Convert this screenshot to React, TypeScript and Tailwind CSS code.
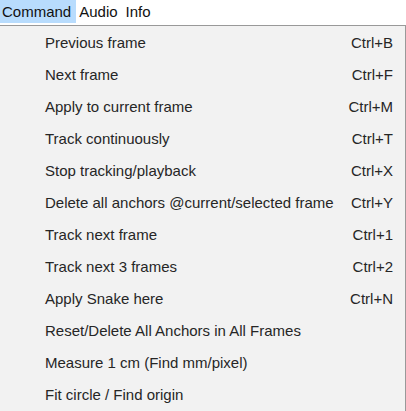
const items: [string, string][] = [
  ["Previous frame", "Ctrl+B"],
  ["Next frame", "Ctrl+F"],
  ["Apply to current frame", "Ctrl+M"],
  ["Track continuously", "Ctrl+T"],
  ["Stop tracking/playback", "Ctrl+X"],
  ["Delete all anchors @current/selected frame", "Ctrl+Y"],
  ["Track next frame", "Ctrl+1"],
  ["Track next 3 frames", "Ctrl+2"],
  ["Apply Snake here", "Ctrl+N"],
  ["Reset/Delete All Anchors in All Frames", ""],
  ["Measure 1 cm (Find mm/pixel)", ""],
  ["Fit circle / Find origin", ""],
]

export default function App() {
  return (
    <div className="h-[411px] w-[406px] overflow-hidden bg-white font-['Liberation_Sans',Arial,sans-serif] text-[15px] text-[#262626]">
      {/* Menu bar */}
      <div className="flex h-6 items-start text-[#111111]">
        <span className="h-[23px] bg-[#b8dcfd] pl-[2px] pr-[5px] pt-[2px] leading-[19px]">
          Command
        </span>
        <span className="ml-[3px] pt-[2px] leading-[19px]">Audio</span>
        <span className="ml-[8px] pt-[2px] leading-[19px]">Info</span>
      </div>

      {/* Dropdown */}
      <div className="mt-[1px] h-[400px] border-t border-r border-[#999999] bg-[#f2f2f2] pt-[1px]">
        {items.map(([label, key]) => (
          <div key={label} className="flex h-8 items-center justify-between pl-[45px] pr-[12px]">
            <span>{label}</span>
            <span>{key}</span>
          </div>
        ))}
      </div>
    </div>
  )
}
